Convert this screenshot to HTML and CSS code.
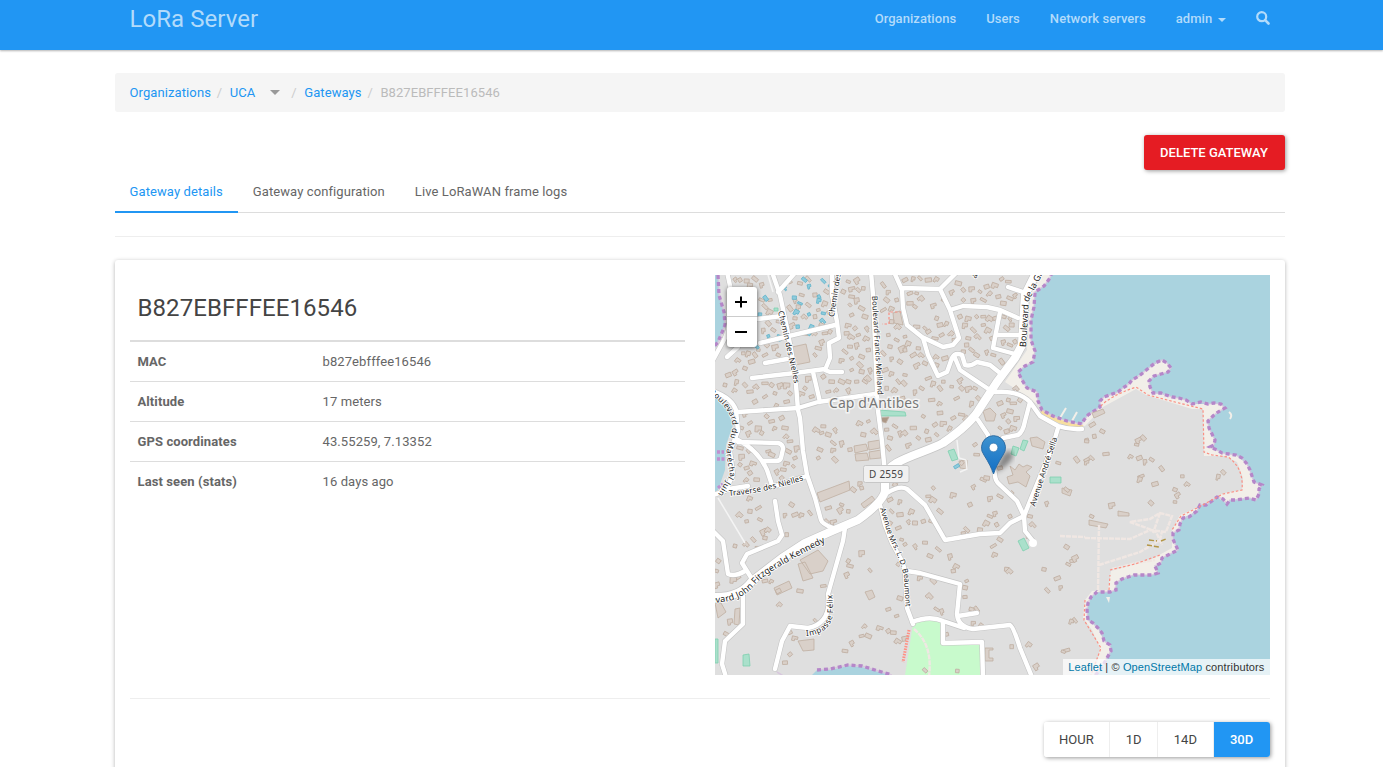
FILE: index.html
```html
<!DOCTYPE html>
<html lang="en">
<head>
<meta charset="utf-8">
<title>LoRa Server</title>
<link rel="stylesheet" href="styles.css">
</head>
<body>
<header class="navbar">
  <div class="container navbar-inner">
    <a class="brand">LoRa Server</a>
    <nav class="nav">
      <a>Organizations</a><a>Users</a><a>Network servers</a>
      <a>admin <span class="caret"></span></a>
      <a class="search"><svg width="14" height="14" viewBox="0 0 14 14"><circle cx="5.7" cy="5.7" r="4.500" fill="none" stroke="currentColor" stroke-width="2.2"/><path d="M9.2 9.2 12.500 12.500" stroke="currentColor" stroke-width="2.6" stroke-linecap="round"/></svg></a>
    </nav>
  </div>
</header>
<main class="container">
  <ol class="breadcrumb">
    <li><a>Organizations</a></li>
    <li><a>UCA</a><span class="org-arrow"></span></li>
    <li><a>Gateways</a></li>
    <li class="current">B827EBFFFEE16546</li>
  </ol>
  <div class="actions"><button class="btn btn-danger">Delete gateway</button></div>
  <ul class="tabs"><li class="active">Gateway details</li><li>Gateway configuration</li><li>Live LoRaWAN frame logs</li></ul>
  <hr class="rule">
  <section class="panel">
    <div class="columns">
      <div class="details">
        <h3>B827EBFFFEE16546</h3>
        <dl>
          <div><dt>MAC</dt><dd>b827ebfffee16546</dd></div>
          <div><dt>Altitude</dt><dd>17 meters</dd></div>
          <div><dt>GPS coordinates</dt><dd>43.55259, 7.13352</dd></div>
          <div><dt>Last seen (stats)</dt><dd>16 days ago</dd></div>
        </dl>
      </div>
      <div class="map">
        <svg class="tiles" viewBox="715 275 555 400" width="555" height="400">
          <defs>
            <linearGradient id="pin" x1="0" y1="0" x2="0" y2="1"><stop offset="0" stop-color="#3f93cf"/><stop offset="1" stop-color="#126fc6"/></linearGradient>
            <filter id="soft"><feGaussianBlur stdDeviation="2.5"/></filter>
            <path id="coast" d="M1052 272L1050 278 1044 286 1035 292 1034 307 1031 320 1031 340 1035 351 1033 362 1025 366 1018 372 1022 380 1027 388 1037 392 1038 401 1042 410 1053 416 1067 421 1082 424 1084 420 1088 415 1100 407 1100 401 1104 397 1118 392 1123 388 1129 384 1132 380 1139 376 1144 372 1150 367 1155 363 1162 360 1167 363 1171 368 1168 372 1161 374 1154 376 1149 381 1150 387 1153 393 1161 393 1166 395 1172 397 1179 398 1186 400 1192 404 1201 402 1208 404 1214 403 1221 404 1225 408 1218 412 1213 416 1208 421 1209 428 1212 434 1215 440 1214 445 1210 447 1217 450 1222 453 1229 454 1236 455 1242 458 1247 464 1250 470 1252 476 1254 482 1262 485 1259 489 1259 494 1256 500 1249 498 1242 499 1236 500 1230 500 1227 504 1223 499 1217 497 1212 501 1206 505 1200 505 1197 511 1189 517 1183 518 1180 524 1179 530 1173 533 1173 539 1175 544 1178 550 1172 553 1168 555 1162 558 1161 563 1155 566 1158 573 1152 575 1134 575 1128 577 1122 579 1116 583 1116 590 1110 592 1097 592 1091 597 1088 603 1087 610 1088 620 1093 623 1098 628 1102 633 1104 641 1110 645 1111 651 1107 658 1102 667 1094 677"/>
            <g id="minor">
              <path d="M772 272L780 295 787 328 795 372 798 410 800 418 803 451 807 475 815 498 821 520Q822 524 833 528"/>
              <path d="M794 274L778 292M832 272L832 295 837 322 839 338 829 343 830 358 825 370 830 372 842 372M758 319L782 316M760 343L835 325M752 378L795 373 825 369M765 363L787 359M813 372L820 402M738 412L798 408 818 402 875 394"/>
              <path d="M871 272L873 295 877 393 878 411 882 441 885 474M894 272L902 290 903 308 907 325 922 337 943 347 953 345 959 338 950 310 940 289 957 272M902 288L940 289M950 310L963 306 987 307 1000 310 1018 318M1000 312L993 348 1015 354M997 335L1018 335M1008 287L1023 292"/>
              <path d="M923 338L928 355 938 376 947 372 952 358Q955 352 962 355L965 365Q970 367 977 362L990 365 1000 373M955 358L960 370 975 380 990 390M995 392Q1018 390 1030 402L1040 416 1058 426Q1070 430 1082 429M1030 402L1025 421Q1023 432 1018 435L1003 438M978 420L988 435 995 475Q995 481 1000 485L1017 501 1024 516"/>
              <path d="M1058 428L1053 445 1030 501 1024 516 1025 531 1033 541M887 493Q900 485 907 489L925 505 945 540 980 534 1000 533 1010 523 1024 516M880 505L885 525 892 543 902 561 905 571 907 608 913 624M907 571L920 573 960 584 957 614Q958 627 973 629L1010 625Q1013 626 1020 648L1032 677M958 616L977 613M912 622Q930 615 943 621L964 628M943 621L943 643 982 642 983 677"/>
              <path d="M727 272L731 290Q733 320 725 338L713 360M713 391Q732 398 736 410L738 431 730 451 733 475 725 491 713 495M727 357L738 347M738 442L778 443Q783 444 783 449L781 458Q780 461 776 461L763 461M738 440Q758 450 767 470L772 485M722 490L748 486M772 487L807 476M775 501L778 521 782 535 778 541 747 554 742 563 752 579M713 531L723 541 728 574Q735 577 745 571M743 596L743 624 725 641 722 664 726 677M845 528L843 541 828 594Q832 623 808 628L790 626 782 641 775 669"/>
            </g>
            <path id="major" d="M1040 265L1025 295 1022 345 1015 358 997 382 980 408Q972 423 943 443C925 453 885 461 885 477L885 491Q883 502 858 520L832 531 805 543 782 558 752 581Q740 598 713 597"/>
            <path id="l-nielles" d="M780 311L795 376 799 400"/>
            <path id="l-chemin" d="M832 317L839 272"/>
            <path id="l-meil" d="M874 296L880 397"/>
            <path id="l-garoupe" d="M1024 347L1027 300 1045 265"/>
            <path id="l-juin" d="M710 391Q738 412 734 431L728 453 732 475 717 500"/>
            <path id="l-trav" d="M729 494Q765 491 807 477"/>
            <path id="l-jfk" d="M704 600Q738 604 755 582 765 570 825 540"/>
            <path id="l-mrs" d="M882 508L891 538Q900 553 906 576L908 616"/>
            <path id="l-felix" d="M806 634Q832 632 831 608L830 585"/>
            <path id="l-sella" d="M1033 506L1058 430"/>
          </defs>
          <rect x="715" y="275" width="555" height="400" fill="#f2efe9"/>
          <path fill="#dfdfdf" d="M715 275H1042L1030 295 1027 350 1005 382 1017 390 1038 405 1055 423 1085 426 1103 407 1136 389 1146 395 1192 409 1203 409 1204 456 1225 456 1237 462 1243 478 1242 490 1222 494 1197 508 1180 515 1172 530 1172 548 1150 560 1111 571 1108 590 1092 591 1085 600 1083 618 1092 630 1100 648 1095 675H715Z"/>
          <path class="sea" d="M1052 275L1050 278 1044 286 1035 292 1034 307 1031 320 1031 340 1035 351 1033 362 1025 366 1018 372 1022 380 1027 388 1037 392 1038 401 1042 410 1053 416 1067 421 1082 424 1084 420 1088 415 1100 407 1100 401 1104 397 1118 392 1132 380 1150 367 1162 360 1167 363 1171 368 1168 372 1154 376 1149 381 1150 387 1153 393 1166 395 1186 400 1192 404 1221 404 1225 408 1213 416 1208 421 1209 428 1215 440 1214 445 1210 447 1222 453 1236 455 1247 464 1254 482 1262 485 1259 489 1259 494 1256 500 1249 498 1230 500 1227 504 1217 497 1206 505 1200 505 1197 511 1183 518 1179 530 1173 533 1173 539 1178 550 1162 558 1161 563 1155 566 1158 573 1152 575 1134 575 1122 579 1116 583 1116 590 1110 592 1097 592 1091 597 1087 610 1088 620 1098 628 1104 641 1110 645 1111 651 1102 667 1094 675H1270V275Z"/>
          <path class="sea" d="M715 275H718L719 295 724 312 725 325 718 342 715 348ZM715 396L728 408 733 425 726 445 725 470 718 490 715 492ZM812 675L817 670 830 670 848 666 862 667 875 671 890 675Z"/>
          <path d="M1041 411Q1058 424 1083 427" fill="none" stroke="#f7dfa0" stroke-width="4"/>
          <path d="M1060 418L1066 408M1072 421L1077 412M1229 412Q1233 415 1230 419" fill="none" stroke="#f2efe9" stroke-width="2"/>
          <path d="M1106 597L1110 597 1109 603Z" fill="#f2efe9"/>
          <path fill="#c8facc" d="M913 624Q930 616 943 621V643L982 642 983 675H905Z"/>
          <g fill="none" stroke="#d5bfdd" stroke-width="1.6" opacity=".7"><use href="#coast"/><path d="M718 275L719 295 724 312 725 325 718 342 713 348M777 672L785 677M817 670L830 669 848 665 862 666 875 670 892 675"/></g>
          <g fill="none" stroke="#b587c9" stroke-width="3.3" stroke-dasharray="4 3"><use href="#coast"/><path d="M718 275L719 295 724 312 725 325 718 342 713 348M817 670L830 669 848 665 862 666 875 670 892 675"/></g>
          <path d="M717 452H724M717 459H726M718 488L723 484" stroke="#c08fd0" stroke-width="3.500" stroke-dasharray="3 1.500"/>
          <g fill="#aae0cb" stroke="#7ecfae" stroke-width=".8">
            <path d="M948 451L954 449 958 459 952 461ZM1013 446L1019 448 1016 456 1011 454ZM1023 440L1028 441 1024 451 1020 449ZM1050 477H1061V483H1050ZM1018 541L1024 538 1029 548 1023 551ZM743 655L749 654 750 666 743 666ZM715 639H718V663H715ZM879 410L905 412 906 416 880 416ZM774 308H778V311H774Z"/>
          </g>
          <g id="buildings" fill="#d9d0c9" stroke="#bfaea1" stroke-width=".8">
            <path d="M792 347L806 344 810 362 795 365ZM817 493L849 481 850 490 820 502ZM854 446L866 444 868 450 855 453ZM868 442L880 440 880 448 869 450ZM855 454L867 453 869 460 856 461ZM869 452L881 450 881 458 870 459ZM861 504L872 496 875 500 864 508ZM774 588L789 581 792 588 777 595ZM800 560L818 550 828 561 823 571 810 574ZM798 564L805 562 813 578 803 581ZM798 641L814 639 814 650 803 651ZM715 603L721 603 726 612 718 618ZM735 609L740 608 739 625 734 624ZM1010 466L1015 470 1019 464 1023 467 1027 465 1032 467 1026 472 1030 476 1026 487 1018 482 1009 484 1007 477 1013 475ZM1030 438L1037 437 1045 442 1043 449 1032 446ZM1092 413L1103 409 1105 413 1094 418ZM1118 511L1129 513V516H1118ZM1089 520L1108 524 1106 528 1089 525ZM1062 488L1072 490 1070 496 1062 493ZM959 461L967 460 967 469 960 468ZM865 592L872 590 875 597 869 600ZM893 313L900 311 903 325 894 323ZM985 648H993V650H989V658H993V661H985ZM983 411L990 408 996 414 994 421 986 421Z"/>
            <path d="M879 418L889 417 886 423 880 421Z" fill="#ac9786"/>
          </g>
          <g id="pools" fill="#8fcbdc" stroke="#5cb1c9" stroke-width=".7"></g>
          <g class="path-light"><path d="M1085 538L1130 539 1150 530 1166 532 1172 516 1160 513 1150 519 1130 522 1144 527 1156 532 1162 545M1099 525L1098 592M1099 565L1140 552 1160 540 1162 531M1160 513L1153 533M1060 536L1085 537M914 629Q933 645 929 676M1112 569L1136 563 1155 560"/></g>
          <path class="track" d="M1101 406Q1110 396 1136 387L1148 395 1175 402 1203 409 1204 452 1212 455 1228 457Q1244 468 1242 490L1223 494 1197 508 1181 516 1172 530M1110 570L1135 564 1160 555M1085 600L1084 620 1101 648 1091 675M1109 590L1110 575M902 312H889V324H882"/>
          <path d="M909 630L903 662" fill="none" stroke="#ff8f82" stroke-width="3" stroke-dasharray="1.5 1.2"/>
          <path d="M1147 545L1159 547M1149 540L1157 541M1161 541L1166 539" stroke="#b39647" stroke-width="1.5" stroke-dasharray="5 2"/>
          <path d="M718 498L745 543" class="lane"/><path d="M957 440L959 458 966 460 967 469 960 472" class="lane"/><path d="M768 275L773 292" class="lane"/>
          <use href="#minor" class="casing" stroke-width="5.6"/><use href="#major" class="casing" stroke-width="9.5"/>
          <use href="#minor" class="road" stroke-width="4.4"/><use href="#major" class="road" stroke-width="8.2"/>
          <circle cx="1033" cy="543" r="4" fill="#fff"/>
          <g class="street">
            <text><textPath href="#l-nielles" textLength="74">Chemin des Nielles</textPath></text>
            <text><textPath href="#l-chemin">Chemin des</textPath></text>
            <text class="small"><textPath href="#l-meil" textLength="99">Boulevard Francis Meilland</textPath></text>
            <text class="large"><textPath href="#l-garoupe">Boulevard de la Garoupe</textPath></text>
            <text><textPath href="#l-juin" textLength="118">Boulevard du Maréchal Juin</textPath></text>
            <text><textPath href="#l-trav" textLength="76">Traverse des Nielles</textPath></text>
            <text class="large"><textPath href="#l-jfk" startOffset="4" textLength="134">levard John Fitzgerald Kennedy</textPath></text>
            <text class="small"><textPath href="#l-mrs" textLength="103">Avenue Mrs. L. D. Beaumont</textPath></text>
            <text><textPath href="#l-felix" textLength="54">Impasse Félix</textPath></text>
            <text><textPath href="#l-sella" textLength="72">Avenue André Sella</textPath></text>
            <text x="974" y="278" transform="rotate(-60 974 278)">a</text>
          </g>
          <text class="place" x="829" y="408" textLength="90">Cap d'Antibes</text>
          <rect x="863.5" y="465.5" width="45.500" height="17" rx="2" fill="#f0f0f0" stroke="#c7c7c7"/>
          <text class="ref" x="869" y="477.5" textLength="34">D 2559</text>
          <path d="M994 473L1003 454Q1013 446 1013 457Q1009 466 994 473" fill="#000" opacity=".4" filter="url(#soft)"/>
          <path d="M993.5 474Q991 466 984 455A12 12 0 1 1 1003 455Q996 466 993.5 474Z" fill="url(#pin)" stroke="#2e6da4" stroke-width="1"/>
          <circle cx="993.5" cy="447.5" r="4.3" fill="#fff" stroke="#2e6da4" stroke-width=".6"/>
        </svg>
        <div class="zoom"><a><svg width="14" height="14"><path d="M7 1.500V12.500M1 7H13"/></svg></a><a><svg width="14" height="14"><path d="M1 7H13"/></svg></a></div>
        <div class="credit"><a>Leaflet</a> | © <a>OpenStreetMap</a> contributors</div>
      </div>
    </div>
    <hr class="rule">
    <div class="ranges"><button>Hour</button><button>1D</button><button>14D</button><button class="on">30D</button></div>
  </section>
</main>
<script src="map.js"></script>
</body>
</html>
```
FILE: styles.css
```css
* { box-sizing: border-box; }
body { margin: 0; height: 767px; overflow: hidden; background: #fff; color: #666; font: 13px/24px Roboto, sans-serif; letter-spacing: .1px; }
.container { width: 1170px; margin-left: 114.5px; }
.navbar { height: 50px; background: #2196f3; box-shadow: 0 1px 2px rgba(0,0,0,.3); color: #b2dbfb; }
.navbar-inner { display: flex; justify-content: space-between; padding: 0 15px; }
.brand { font-size: 24px; line-height: 38px; letter-spacing: .05px; }
.nav { display: flex; gap: 30px; line-height: 37px; font-weight: 500; letter-spacing: .05px; }
.caret { display: inline-block; margin-left: 2px; border: 4px solid transparent; border-top-color: currentColor; border-bottom: 0; vertical-align: 1px; }
.search svg { display: block; margin-top: 11px; }
.breadcrumb { display: flex; list-style: none; height: 39px; margin: 23px 0; padding: 8px 15px 7px; border-radius: 3px; background: #f5f5f5; }
.breadcrumb a { color: #2196f3; }
.breadcrumb li + li::before { content: "/"; padding: 0 7.5px 0 5.8px; color: #ccc; }
.breadcrumb .current { color: #bbb; letter-spacing: .07px; }
.org-arrow { display: inline-block; margin: 0 5px 0 15px; border: 5px solid transparent; border-top-color: #999; border-bottom: 0; vertical-align: 2px; }
.actions { display: flex; justify-content: flex-end; }
button { font: 500 13px/23px Roboto, sans-serif; text-transform: uppercase; border: 0; padding: 6px 16px; }
.btn { height: 35px; width: 141px; padding: 6px 0; border-radius: 3px; box-shadow: 1px 1px 4px rgba(0,0,0,.4); white-space: nowrap; }
.btn-danger { background: #e51c23; color: #fff; }
.tabs { display: flex; list-style: none; margin: 0; padding: 0; height: 43px; box-shadow: inset 0 -1px #ddd; }
.tabs li { height: 43px; padding: 10px 15px 9px; }
.tabs .active { color: #2196f3; box-shadow: inset 0 -2px #2196f3; }
.rule { margin: 23px 0; border: 0; border-top: 1px solid #eee; }
.panel { height: 520px; padding: 15px; border-radius: 3px; box-shadow: 0 1px 4px rgba(0,0,0,.3); }
.columns { display: grid; grid-template-columns: 555px 555px; gap: 30px; }
.details h3 { margin: 0; height: 67px; padding: 20px 8px 0; border-bottom: 2px solid #ddd; font-size: 24px; line-height: 26px; font-weight: 400; color: #444; letter-spacing: .08px; }
dl { margin: 0; }
dl div { display: flex; height: 40px; padding: 8px 8px 7px; border-bottom: 1px solid #ddd; }
dl div:first-child { padding-top: 8px; }
dl div:last-child { border-bottom: 0; }
dt { width: 185px; font-weight: 700; }
dd { margin: 0; }
.map { position: relative; height: 400px; overflow: hidden; }
.tiles { display: block; letter-spacing: 0; font-family: "Noto Sans", sans-serif; }
.sea { fill: #aad3df; }
.casing, .road { fill: none; stroke-linejoin: round; stroke-linecap: round; }
.casing { stroke: #c5c5c5; }
.road { stroke: #fff; }
.path-light { fill: none; stroke: #f0e7e3; stroke-width: 2.4; stroke-dasharray: 5 1; }
.track { fill: none; stroke: #fa8f83; stroke-width: 1.2; stroke-dasharray: 2.5 2; }
.lane { fill: none; stroke: #f4f4f4; stroke-width: 1.5; }
.street { font-size: 8px; fill: #222; stroke: #fff; stroke-width: 1.5px; paint-order: stroke; dominant-baseline: middle; }
.street .small { font-size: 7.6px; }
.street .large { font-size: 9px; }
.place { font-size: 14px; fill: #777; stroke: #f3f3f3; stroke-width: 3px; paint-order: stroke; }
.ref { font-size: 10px; fill: #444; }
.zoom { position: absolute; left: 12px; top: 12px; width: 30px; background: #fff; border-radius: 3px; box-shadow: 0 1px 4px rgba(0,0,0,.6); }
.zoom a { display: flex; align-items: center; justify-content: center; height: 30px; }
.zoom a:first-child { border-bottom: 1px solid #ccc; }
.zoom svg { margin-right: 1px; }
.zoom path { stroke: #000; stroke-width: 2; }
.credit { position: absolute; right: 0; bottom: 0; height: 16px; padding: 0 5px; background: rgba(255,255,255,.7); color: #333; font: 11px/16px "Liberation Sans", sans-serif; letter-spacing: .13px; white-space: nowrap; }
.credit a { color: #0078a8; }
.ranges { display: flex; width: 226px; height: 35px; margin-left: auto; border-radius: 3px; box-shadow: 1px 1px 4px rgba(0,0,0,.4); }
.ranges button { flex: auto; padding: 6px 0; width: 56px; background: #fff; color: #444; font-weight: 400; border-right: 1px solid #eee; }
.ranges button:first-child { width: 67px; border-radius: 3px 0 0 3px; }
.ranges button:nth-child(2) { width: 48px; }
.ranges .on { background: #2196f3; color: #fff; border: 0; border-radius: 0 3px 3px 0; font-weight: 500; }
```
FILE: map.js
```js
// Footprint centres per tile, in thirds of a map unit from the tile origin.
const tiles = [
  [715, 275, "60,12 95,18 120,12 140,28 140,75 75,15 105,30 150,95 165,75 165,110 225,20 255,25 280,12 300,60 335,50 240,75 260,60 225,100 250,95 280,90 310,105 330,85 345,110 240,130 270,125 300,125 320,150 230,150 190,140 160,145 145,165 175,165 110,200 100,235 120,240 85,235 70,255 110,260 90,280 60,290 130,225 155,210 180,215 190,240 150,240 65,320 90,330 105,350 60,345 40,300 30,330 125,335 150,325 170,330 195,330 180,355 150,365 215,330 225,355 215,380 185,390 120,380 270,175 300,175 330,175 345,170 320,200 310,220 300,240 280,310 270,340 290,365 260,355 325,305 350,320 365,345 340,350 380,320 400,345 410,65 405,90 425,75 440,100 410,120 400,150 420,160 395,175 410,185 430,180 450,125 455,160 405,215 390,230 425,210 440,245 410,250 380,255 435,270 460,225 455,190 410,285 440,290 460,310 425,320 450,320 465,285 400,320 505,30 520,50 515,75 545,75 530,100 505,105 530,140 550,155 520,180 545,195 560,220 525,215 505,235 530,250 555,260 510,285 530,295 550,320 515,340 540,345 560,370 400,20 425,15 445,40 430,45 410,40 385,50"],
  [900, 275, "15,15 40,10 60,10 85,15 110,12 30,55 50,55 65,70 30,85 45,95 100,90 110,130 85,170 50,155 75,160 120,150 140,145 125,180 105,190 155,175 165,195 130,75 155,50 175,25 190,45 215,40 240,50 260,35 285,30 305,12 325,20 270,55 295,65 330,70 345,60 310,85 190,75 220,75 250,75 180,125 205,130 230,125 250,125 270,130 285,130 310,125 330,130 335,150 320,160 310,200 330,210 345,200 195,150 220,165 250,150 265,165 275,190 205,190 235,185 200,210 230,240 260,230 280,240 305,260 190,230 215,225 15,185 25,205 40,240 55,220 65,240 15,225 75,265 50,270 15,300 12,325 45,350 65,340 85,310 100,325 120,340 130,320 110,245 135,250 110,270 180,315 155,335 185,340 205,340 225,340 170,370 215,385 235,370 95,375 120,385 300,385 325,375 350,340 340,385 360,375"],
  [715, 408, "90,15 80,60 105,45 130,60 155,25 170,40 180,60 200,30 210,60 215,85 225,100 140,75 100,75 75,120 100,130 80,145 75,170 95,180 115,165 105,195 125,215 95,215 160,130 170,140 185,190 205,185 235,175 245,120 220,130 240,150 215,165 200,210 190,230 305,65 320,75 340,80 360,65 325,55 355,105 380,105 315,125 310,150 355,125 360,155 405,125 435,45 460,40 445,80 480,70 515,65 540,55 555,75 525,90 520,120 435,225 415,245 440,240 105,270 130,300 105,310 75,320 95,340 135,335 145,370 150,390 115,395 210,320 230,290 240,320 260,320 285,315 215,380 160,365 340,300 380,290 375,305 400,310 335,340 355,340 540,230 525,275 555,280 530,310 555,320 525,345 550,360 560,395"],
  [900, 408, "15,75 40,60 55,90 25,110 80,70 105,50 130,45 110,80 85,95 150,60 160,30 185,20 200,30 120,15 70,25 310,20 330,10 325,40 350,30 300,60 320,70 340,60 225,110 230,140 185,165 300,180 250,215 220,235 260,210 335,255 270,270 300,265 210,290 160,260 100,240 85,265 100,275 70,340 95,340 25,340 45,345 120,310 285,315 270,325 290,350 240,365 200,365 190,375 260,345 330,325 390,325 400,350 385,385 300,395 440,285 475,165 530,155 560,160 500,245 560,95 35,310"],
  [1085, 408, "22,50 5,100 20,150 28,85 52,70 160,95 155,110 175,90 180,160 200,155 168,205 165,213 230,182 292,205 308,228 210,228 270,245 277,260 270,282 198,285 80,290 20,325 5,155 400,205 415,193 63,138 138,145 163,150"],
  [715, 541, "60,15 95,10 130,20 10,60 5,130 5,90 70,110 55,115 85,60 150,120 170,120 190,150 255,150 195,190 325,135 400,60 395,100 405,75 465,88 440,35 550,70 520,205 495,260 520,270 535,275 450,255 440,285 460,285 410,305 390,330 300,238 45,240 35,280 225,275 240,290 225,340 210,365 550,300 545,225 555,172"],
  [900, 541, "45,15 75,5 115,25 150,45 90,45 15,10 60,110 100,120 160,90 170,75 200,120 195,140 90,165 195,168 110,205 125,210 215,205 230,205 220,245 245,255 140,280 285,40 280,15 320,85 330,90 515,60 505,70 525,50 432,85 442,148 482,138 500,18 472,112 515,240 525,238 335,317 388,310 500,328 490,332 408,375 172,390 75,388 15,290"]
];
const blues = [
  [715, 275, "210,38 238,68 268,14 282,32 255,85 312,65 312,75 325,18 345,32 245,110 282,118 325,115 325,137 248,155 280,175 160,183 193,183 152,70 135,118 125,215 195,195 290,155"],
  [900, 408, "170,175"]
];
function scatter(groups, id, base) {
  let out = "", n = 0;
  for (const [ox, oy, list] of groups) {
    for (const pair of list.split(" ")) {
      const [x, y] = pair.split(",").map(v => v / 3);
      const w = base + (n * 7 % 5) * 0.7, h = base * 0.7 + (n * 3 % 4) * 0.5;
      const shape = n % 3 ? `M${-w / 2} ${-h / 2}h${w}v${h}h${-w}z` : `M${-w / 2} ${-h / 2}h${w}v${h}h${-w / 2}v2h${-w / 2}z`;
      out += `<path transform="translate(${ox + x} ${oy + y}) rotate(${n * 37 % 90 - 35})" d="${shape}"/>`;
      n++;
    }
  }
  document.getElementById(id).insertAdjacentHTML("beforeend", out);
}
scatter(tiles, "buildings", 3.6);
scatter(blues, "pools", 2.8);
```
